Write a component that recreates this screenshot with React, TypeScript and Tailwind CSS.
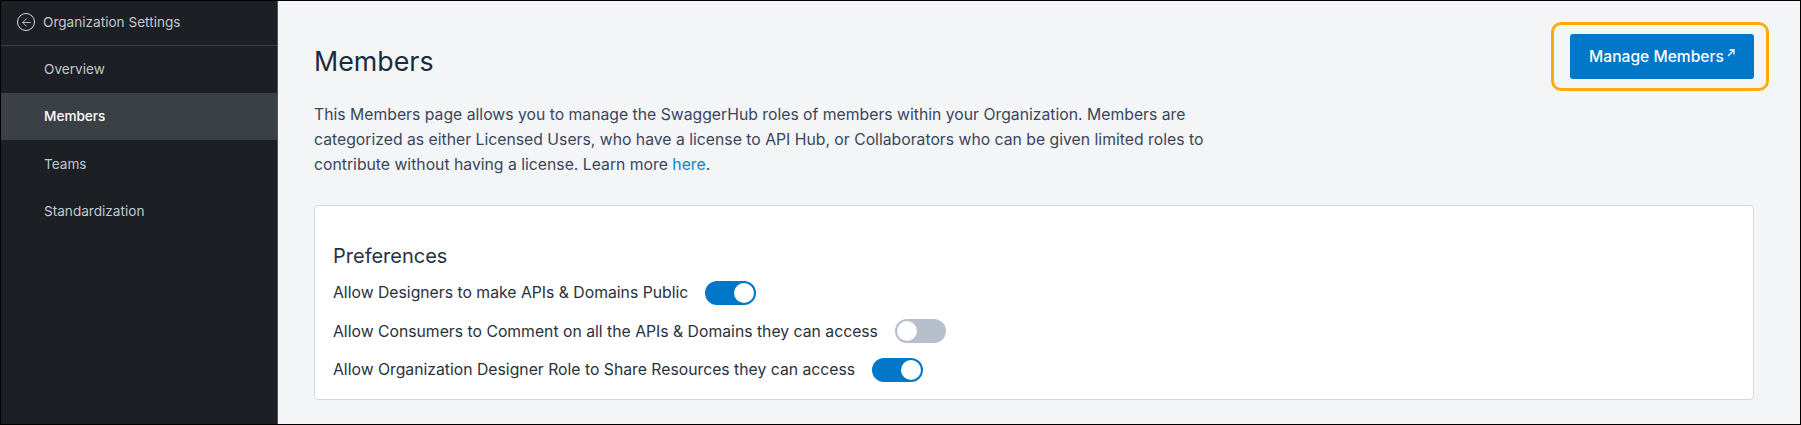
import { ArrowLeft } from 'lucide-react';

const navItems = [
  { label: 'Overview', active: false },
  { label: 'Members', active: true },
  { label: 'Teams', active: false },
  { label: 'Standardization', active: false },
];

const preferences = [
  { label: 'Allow Designers to make APIs & Domains Public', on: true },
  { label: 'Allow Consumers to Comment on all the APIs & Domains they can access', on: false },
  { label: 'Allow Organization Designer Role to Share Resources they can access', on: true },
];

function Toggle({ on }: { on: boolean }) {
  return (
    <span
      className={`flex h-[24px] w-[51px] items-center rounded-full border-2 ${
        on ? 'justify-end border-[#0077c8] bg-[#0077c8]' : 'justify-start border-[#b8bfcc] bg-[#b8bfcc]'
      }`}
    >
      <span className="h-[20px] w-[20px] rounded-full bg-white" />
    </span>
  );
}

export default function App() {
  return (
    <div className="flex h-[425px] w-[1801px] overflow-hidden border border-black bg-[#f4f5f7] font-['Inter',sans-serif]">
      {/* Sidebar */}
      <aside className="w-[277px] shrink-0 border-r border-[#50565c] bg-[#1c1f23] text-[13.6px] text-[#c3c8cf]">
        <div className="flex h-[45px] items-center gap-[8px] border-b border-[#3b4045] pb-[2px] pl-[16px]">
          <span className="flex h-[18px] w-[18px] items-center justify-center rounded-full border border-[#d5d9de]">
            <ArrowLeft size={13} strokeWidth={1.5} className="text-[#d5d9de]" />
          </span>
          <span>Organization Settings</span>
        </div>
        <nav className="-mt-[0.5px]">
          {navItems.map((item) => (
            <div
              key={item.label}
              className={`flex h-[47.4px] items-center pl-[43px] ${
                item.active ? 'bg-[#3b4045] font-medium text-white' : ''
              }`}
            >
              {item.label}
            </div>
          ))}
        </nav>
      </aside>

      {/* Main */}
      <main className="min-w-0 flex-1 pl-[36px] pr-[46px]">
        <div className="flex items-start justify-between">
          <h1 className="mt-[44px] text-[26.8px] leading-[32px] font-normal text-[#1b2a3d]">Members</h1>
          <div className="mt-[21px] -mr-[15px] rounded-[10px] border-[3px] border-[#f9ac0a] py-[9px] pl-[16px] pr-[12px]">
            <button className="flex h-[45px] w-[184px] items-center justify-center rounded-[3px] bg-[#0077c8] text-[15.6px] font-medium text-white">
              Manage Members
              <svg width="8" height="8" viewBox="0 0 8 8" fill="none" stroke="white" strokeWidth="1.3" className="mb-[8px] ml-[3px]">
                <path d="M1 7 L7 1 M2.5 1 H7 V5.5" />
              </svg>
            </button>
          </div>
        </div>

        <p className="mt-[11px] w-[900px] text-[15.75px] leading-[25px] text-[#39465a]">
          This Members page allows you to manage the SwaggerHub roles of members within your Organization. Members are
          categorized as either Licensed Users, who have a license to API Hub, or Collaborators who can be given limited
          roles to contribute without having a license. Learn more <span className="text-[#0a86c9]">here</span>.
        </p>

        <section className="mt-[28px] h-[195px] rounded-[4px] border border-[#d5d8dc] bg-white pl-[18px] pt-[37px]">
          <h2 className="text-[20px] leading-[26px] font-normal text-[#28313d]">Preferences</h2>
          <div className="mt-[5px] flex flex-col">
            {preferences.map((pref) => (
              <div key={pref.label} className="flex h-[38.3px] items-center gap-[17px] text-[15.75px] text-[#28313d]">
                <span>{pref.label}</span>
                <Toggle on={pref.on} />
              </div>
            ))}
          </div>
        </section>
      </main>
    </div>
  );
}
